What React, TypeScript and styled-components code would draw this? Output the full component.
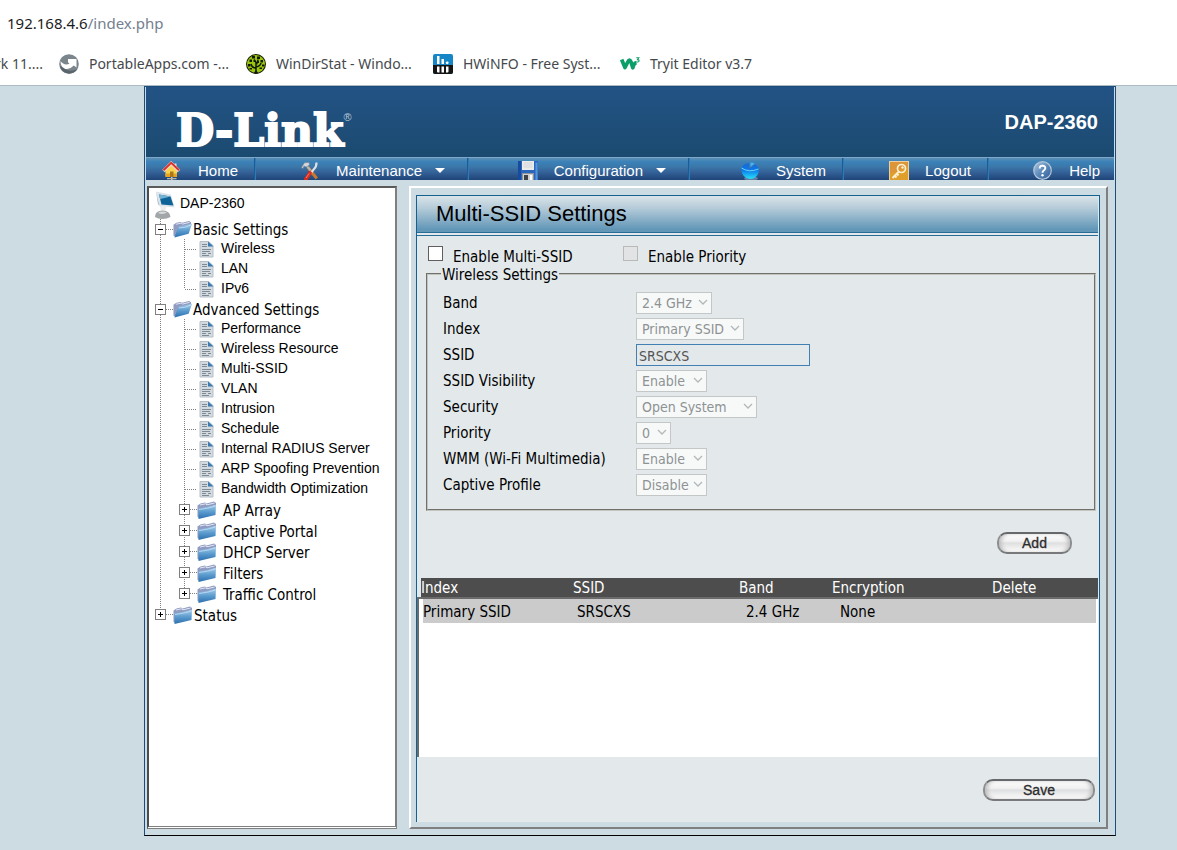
import React from "react";
import styled, { createGlobalStyle } from "styled-components";

const ui = `"DejaVu Sans Condensed", "Noto Sans", sans-serif`;
const arial = `"Liberation Sans", Arial, sans-serif`;
const chrome = `"Noto Sans", "Open Sans", sans-serif`;

const GlobalStyle = createGlobalStyle`
  *, *::before, *::after { box-sizing: border-box; }
  body { margin: 0; background: #cddbe2; font-family: ${ui}; font-size: 15px; color: #000; }
  ul { list-style: none; margin: 0; padding: 0; }
  a { color: inherit; text-decoration: none; }
  svg { display: block; flex: none; }
`;

const Page = styled.div`
  min-height: 100vh;
  display: flex;
  flex-direction: column;
`;

/* ---------- browser strip ---------- */

const BrowserBar = styled.header`
  background: #fff;
  border-bottom: 1px solid #adbcc4;
  height: 86px;
  font-family: ${chrome};
  font-size: 14px;
  overflow: hidden;
`;

const Address = styled.div`
  padding: 11px 7px 0;
  line-height: 24px;
  font-size: 15px;
  color: #1c1c1e;
  span { color: #74808f; }
`;

const Bookmarks = styled.nav`
  display: flex;
  gap: 16px;
  margin-left: -5px;
  padding-top: 17px;
  line-height: 24px;
  color: #45494d;
  white-space: nowrap;
`;

const Bookmark = styled.a<{ $cut?: boolean }>`
  display: flex;
  flex: none;
  align-items: center;
  gap: 10px;
  width: ${(p) => (p.$cut ? "auto" : "171px")};
`;

/* ---------- device frame ---------- */

const Stage = styled.div`
  flex: 1;
  display: flex;
  padding: 0 61px 14px 144px;
`;

const Frame = styled.div`
  flex: 1;
  min-width: 0;
  display: flex;
  flex-direction: column;
  border: 1px solid #1c4c7c;
  border-bottom-color: #000;
`;

const Banner = styled.div`
  height: 70px;
  margin: 0 1px;
  padding: 0 16px 0 30px;
  display: flex;
  align-items: center;
  justify-content: space-between;
  background: linear-gradient(#235385, #1b4a70);
  color: #fff;
  font: bold 20px/24px ${arial};
`;

const Logo = styled.div`
  display: flex;
  align-items: flex-start;
  padding-top: 18px;
  font: bold 44px/48px "DejaVu Serif", serif;
  -webkit-text-stroke: 2px #fff;
  sup {
    font: 11px/12px ${arial};
    color: #b7c9dc;
    -webkit-text-stroke: 0;
    padding-top: 4px;
  }
`;

const Nav = styled.nav`
  display: grid;
  grid-template-columns: 108fr 213fr 221fr 154fr 145fr 127fr;
  height: 23px;
  margin: 0 1px;
`;

const NavItem = styled.a<{ $menu?: boolean }>`
  display: flex;
  align-items: center;
  justify-content: flex-end;
  gap: 16px;
  padding: 3px ${(p) => (p.$menu ? 22 : 16)}px 0 0;
  border-top: 1px solid #7ea6c8;
  background: linear-gradient(#5d8fb5, #3a82b9 18%, #3c77a8 40%, #35649a 62%, #1f4478);
  color: #fff;
  font: 15px/18px ${arial};
  overflow: hidden;
  & + & { box-shadow: inset 1px 0 #1c5c93, inset 2px 0 #2f79b5; }
  &:last-child { padding-right: 14px; }
`;

const Body = styled.div`
  flex: 1;
  display: flex;
  gap: 12px;
  padding: 6px 7px 6px 2px;
`;

/* ---------- tree ---------- */

const TreePanel = styled.aside`
  width: 250px;
  flex: none;
  background: #fff;
  border: 2px solid #7f7f7f;
  border-top-color: #5b5b5b;
  border-left-color: #4d4d4d;
  border-bottom: 3px double #7f7f7f;
  padding: 2px 0 0 6px;
`;

const Root = styled.a`
  display: flex;
  align-items: flex-start;
  gap: 5px;
  height: 29px;
  font: 14px/26px ${arial};
`;

const Branch = styled.ul<{ $nested?: boolean; $tail: number }>`
  margin-left: ${(p) => (p.$nested ? 24 : 0)}px;
  background: repeating-linear-gradient(#808080 0 1px, transparent 1px 2px) 5px 0 / 1px
    calc(100% - ${(p) => p.$tail}px) no-repeat;
`;

const Row = styled.div<{ $tall?: boolean }>`
  display: flex;
  align-items: center;
  height: ${(p) => (p.$tall ? 21 : 20)}px;
  white-space: nowrap;
`;

const Toggle = styled.button`
  width: 11px;
  height: 11px;
  padding: 0;
  border: 1px solid #808080;
  background: #fff;
  flex: none;
`;

const Dash = styled.span<{ $leaf?: boolean }>`
  width: ${(p) => (p.$leaf ? 12 : 7)}px;
  margin: 0 ${(p) => (p.$leaf ? 2 : 0)}px 0 ${(p) => (p.$leaf ? 6 : 0)}px;
  height: 1px;
  flex: none;
  background: repeating-linear-gradient(90deg, #808080 0 1px, transparent 1px 2px);
`;

const FolderLabel = styled.a<{ $inset?: boolean }>`
  padding: 2px 0 0 ${(p) => (p.$inset ? 6 : 1)}px;
  line-height: 18px;
`;

const LeafLabel = styled.a`
  padding: 0 0 2px 7px;
  font: 14px/18px ${arial};
`;

/* ---------- main panel ---------- */

const MainPanel = styled.main`
  flex: 1;
  min-width: 0;
  display: flex;
  border: 2px solid;
  border-color: #fff #7f7f7f #7f7f7f #fff;
  padding: 7px 6px 5px 5px;
`;

const Sheet = styled.div`
  flex: 1;
  min-width: 0;
  border: 1px solid #14618f;
  border-bottom: 0;
  background: #e3e9eb;
`;

const Title = styled.h1`
  margin: 0 1px 2px 0;
  height: 37px;
  padding-left: 19px;
  border-bottom: 1px solid #276d98;
  background: linear-gradient(#dae4e8, #b3cad8 35%, #6397b8 92%);
  font: 22px/36px ${arial};
`;

const Form = styled.form`
  margin-right: 1px;
  border-top: 1px solid #276d98;
`;

const Ticks = styled.div`
  display: grid;
  grid-template-columns: 195px 1fr;
  padding: 10px 0 0 11px;
`;

const Tick = styled.label`
  display: flex;
  align-items: flex-start;
  gap: 10px;
  line-height: 18px;
  span { padding-top: 2px; }
`;

const CheckBox = styled.input`
  appearance: none;
  width: 15px;
  height: 15px;
  margin: 0;
  border: 1px solid #5f5f5f;
  background: #fff;
  &:disabled { border-color: #b9b9b9; background: #e2e3e4; }
`;

const Fieldset = styled.fieldset`
  margin: 0 2px 0 9px;
  padding: 8px 15px 11px;
  border: 2px groove #c4c4be;
  legend {
    margin-left: -2px;
    padding: 2px 1px 0;
    line-height: 14px;
  }
`;

const Field = styled.div`
  display: grid;
  grid-template-columns: 193px 1fr;
  align-items: center;
  height: 26px;
`;

const SelectBox = styled.span<{ $w: number }>`
  position: relative;
  width: ${(p) => p.$w}px;
  height: 22px;
  svg { position: absolute; right: 4px; top: 7px; }
`;

const Select = styled.select`
  appearance: none;
  width: 100%;
  height: 100%;
  padding: 0 0 0 5px;
  border: 1px solid #c3c7c8;
  border-radius: 0;
  background: #f7f9f9;
  color: #8e9293;
  opacity: 1;
  font: 14px/20px ${ui};
`;

const TextBox = styled.input`
  width: 174px;
  height: 22px;
  padding: 1px 2px 0;
  border: 1px solid #4280b4;
  background: #e3e9eb;
  color: #545454;
  font: 14px/18px ${ui};
`;

const Actions = styled.div<{ $inset?: boolean }>`
  display: flex;
  justify-content: flex-end;
  padding: ${(p) => (p.$inset ? "21px 26px 24px" : "22px 3px 0")};
`;

const Pill = styled.button<{ $wide?: boolean }>`
  width: ${(p) => (p.$wide ? 112 : 75)}px;
  height: 22px;
  padding: 0;
  border: 2px solid;
  border-color: #66686b #8c8e90 #77797b;
  border-radius: 10px;
  background: linear-gradient(#fcfcfc, #f1f1f1 40%, #dedfe0 50%, #f4f4f4 85%, #fff);
  box-shadow: inset 4px 0 4px -2px #b9b9b9, inset -4px 0 4px -2px #b9b9b9;
  color: #2c2c2c;
  font: 14px/18px ${arial};
  -webkit-text-stroke: 0.3px #2c2c2c;
`;

const Table = styled.table`
  display: block;
  line-height: 20px;
  thead, tbody { display: block; }
  thead {
    margin-left: 4px;
    background: #4d4d4d;
    color: #fff;
  }
  tbody {
    height: 160px;
    padding: 0 2px 0 4px;
    border-top: 2px solid #6b6b6b;
    border-left: 2px solid #6b6b6b;
    background: #fff;
  }
  tr { display: grid; text-align: left; }
  thead tr { grid-template-columns: 152fr 166fr 93fr 160fr 106fr; height: 19px; }
  tbody tr {
    grid-template-columns: 154fr 169fr 94fr 152fr 104fr;
    height: 24px;
    line-height: 26px;
    background: #cbcbcb;
  }
  th, td { padding: 0; font-weight: normal; }
`;

/* ---------- drawings ---------- */

const CaretSvg = styled.svg`
  margin-left: -3px;
`;

const Caret = () => (
  <CaretSvg width="10" height="5" viewBox="0 0 10 5">
    <path d="M0 0h10L5 5z" fill="#fff" />
  </CaretSvg>
);

const Chevron = () => (
  <svg width="10" height="7" viewBox="0 0 10 7" fill="none" stroke="#b3b7b8" strokeWidth="1.3">
    <path d="M1 1l4 4 4-4" />
  </svg>
);

const PortableIcon = () => (
  <svg width="20" height="20" viewBox="0 0 20 20">
    <circle cx="10" cy="10" r="9.8" fill="#7b858c" />
    <path d="M1 12Q2 18 9 19.6Q15 20 18.6 15Q11 18.500 6 15Q3 13 1 12z" fill="#59646c" />
    <path d="M1.500 7Q5 12 10.500 9.800L9 8.300V5h8.500v8.500l-2.700-2Q10 16.500 5.500 14.500Q1.500 12.500 1.500 7z" fill="#fff" />
  </svg>
);

const WinDirIcon = () => (
  <svg width="20" height="20" viewBox="0 0 20 20">
    <circle cx="10" cy="10" r="10" fill="#161c05" />
    <circle cx="10" cy="10" r="9" fill="#9ac70c" />
    <g stroke="#12180a" fill="none">
      <path d="M10 19.500V9M10 14Q6 14 5 10M10 13Q14.500 12 15 9M10 9Q10 7 8 5.500M10.500 10Q12 8 12 5.500" strokeWidth="1.500" />
    </g>
    <g fill="#12180a">
      <path d="M6 2h3v2.500H6zM11 2.500h3v2.500h-3zM3.500 5.500h2.500v2.500H3.500zM14.500 6h2.500v2.500h-2.500zM2 10h2.500v2.500H2zM7.500 6h1.500v2H7.500zM11.500 7h1.500v2h-1.500zM16 10.500h2.500v2H16zM3.500 14h2.500v1.500H3.500zM13.500 13.500h2.500v1.500h-2.500z" />
      <path d="M7.500 19.500L10 16l2.500 3.500z" />
    </g>
  </svg>
);

const HwIcon = () => (
  <svg width="20" height="20" viewBox="0 0 20 20">
    <rect width="20" height="20" rx="2" fill="#1786c6" />
    <path d="M0 11h20v7a2 2 0 0 1-2 2H2a2 2 0 0 1-2-2z" fill="#151515" />
    <path d="M4 2h2.500v8H4zM8.500 5H11v5H8.500z" fill="#fff" />
    <circle cx="14.200" cy="8.800" r="1.400" fill="#fff" />
    <path d="M4 12.500h2.500v6H5a1 1 0 0 1-1-1zM8.500 12.500H11v6H8.500zM13 12.500h2.500v5a1 1 0 0 1-1 1H13z" fill="#fff" />
  </svg>
);

const W3Icon = () => (
  <svg width="20" height="20" viewBox="0 0 20 20">
    <path d="M1.600 5.500L5 13.500L7.800 8Q9.500 4.500 11 8L12.800 13.800Q13.500 9.500 16.300 8.500" fill="none" stroke="#0a9f68" strokeWidth="3.800" strokeLinejoin="round" />
    <path d="M16.300 3.700h2.500l-1.300 1.900q1.800 0 1.500 1.600q-.7 1.300-2.900.5" fill="none" stroke="#0a9f68" strokeWidth="1.100" />
  </svg>
);

const HomeIcon = () => (
  <svg width="20" height="20" viewBox="0 0 20 20">
    <path d="M3.500 9L9.500 4 15 9v6.500H3.500z" fill="#f9d34c" />
    <path d="M3.500 12.500H15v3.500H3.500z" fill="#e9a41f" />
    <path d="M12.500 2.500h2v4h-2z" fill="#e8e0dd" />
    <path d="M1.500 10L9.200 2.300 17 10" fill="none" stroke="#f6d9d4" strokeWidth="3.400" />
    <path d="M1.500 9.300L9.200 1.800 17 9.300" fill="none" stroke="#d93227" strokeWidth="2" />
    <path d="M8 10.500h3.500V16H8z" fill="#a8761d" />
    <path d="M9 16h1.500v4H9z" fill="#cfc7b4" />
    <path d="M5 17h9.500v1.300H5z" fill="#bdb59f" />
  </svg>
);

const ToolsIcon = () => (
  <svg width="20" height="20" viewBox="0 0 20 20" fill="none">
    <path d="M8 6.500L16.800 17.500" stroke="#c8792c" strokeWidth="3" />
    <path d="M6.500 4.500L10.500 9.300" stroke="#b4b7bb" strokeWidth="2" />
    <path d="M1.500 6.500L4.500 1.800l4.500-.3L9.500 4 6 6 4 5 3 7.500z" fill="#d4d8de" stroke="#7c828b" strokeWidth=".6" />
    <path d="M16.500 1.500Q16.500 6 14 8L10 13" stroke="#dde1e6" strokeWidth="2.200" />
    <path d="M10 12L6 18" stroke="#dc2a1c" strokeWidth="3.800" strokeLinecap="round" />
    <path d="M9.300 12.300L6 17" stroke="#ff8a72" strokeWidth=".8" />
  </svg>
);

const DiskIcon = () => (
  <svg width="20" height="20" viewBox="0 0 20 20">
    <path d="M0 0h20v20H0z" fill="#2a66bd" />
    <path d="M0 0h3v20H0z" fill="#164b9d" />
    <path d="M17.500 1.500h2v18h-2z" fill="#5794da" />
    <path d="M4 0h12v9H4z" fill="#ebebea" />
    <path d="M5.500 2h9M5.500 4h9M5.500 6h9" stroke="#d3d5d8" />
    <path d="M4 12h12v8H4z" fill="#8e9399" />
    <path d="M5 13h10v7H5z" fill="#cfd1d1" />
    <path d="M6 14h4v6H6z" fill="#3f4347" />
    <path d="M12 14h2v5h-2z" fill="#fff" />
  </svg>
);

const SystemIcon = () => (
  <svg width="20" height="20" viewBox="0 0 20 20">
    <defs>
      <linearGradient id="sys" x2="0" y2="1">
        <stop offset="0" stopColor="#1766d8" />
        <stop offset=".45" stopColor="#0b7be8" />
        <stop offset="1" stopColor="#27e2fb" />
      </linearGradient>
    </defs>
    <ellipse cx="11" cy="17.500" rx="7" ry="2" fill="#8fa3bd" opacity=".6" />
    <path d="M9 2v6l6-4.500Q19.500 6 19 10Q17 18 10 18Q2 17 1 8Q2 3 9 2z" fill="url(#sys)" />
    <path d="M10.500 1.500Q13 1.500 14.500 2.500L10.500 6z" fill="#43b6f7" />
    <path d="M1.500 7Q9 12 18.500 8" fill="none" stroke="#74cffa" strokeWidth="1" />
  </svg>
);

const KeyIcon = () => (
  <svg width="20" height="20" viewBox="0 0 20 20">
    <rect x=".5" y=".5" width="19" height="19" fill="#dc9638" stroke="#f0cf9e" />
    <path d="M1 12Q10 12 19 5V19H1z" fill="#e3a820" opacity=".55" />
    <circle cx="12.500" cy="7.500" r="4" fill="none" stroke="#fff0d2" strokeWidth="1.700" />
    <circle cx="13.500" cy="6.500" r="1.200" fill="#fff0d2" />
    <path d="M10 10.500L3.500 17M6 15l1.500 1.500M8 13l1.500 1.500" stroke="#fff0d2" strokeWidth="1.900" fill="none" />
  </svg>
);

const HelpIcon = () => (
  <svg width="20" height="20" viewBox="0 0 20 20">
    <defs>
      <linearGradient id="hlp" x2="1" y2="1">
        <stop offset="0" stopColor="#b4cbe2" />
        <stop offset=".5" stopColor="#5c8abb" />
        <stop offset="1" stopColor="#2f5d97" />
      </linearGradient>
    </defs>
    <circle cx="9.500" cy="9.500" r="8.800" fill="url(#hlp)" stroke="#b3c5d9" strokeWidth="1.200" />
    <path d="M6.800 7.500Q6.500 4.700 9.500 4.700T12.300 7.300Q12.200 8.800 10.500 9.700Q9.500 10.500 9.500 11.800" fill="none" stroke="#fff" strokeWidth="1.900" />
    <circle cx="9.500" cy="14.300" r="1.200" fill="#fff" />
  </svg>
);

const ComputerIcon = () => (
  <svg width="20" height="30" viewBox="0 0 20 30">
    <path d="M1 1.500L16 4.500 19.500 17.500 4.500 16z" fill="#dbe4ea" />
    <path d="M4 4.500L15.500 6.500 18.500 15.500 6.500 14.500z" fill="#0f6497" />
    <path d="M4 4.500L15.500 6.500Q9 8 5 9z" fill="#74b3d4" />
    <path d="M1 1.500L4.500 16 3 14z" fill="#a5b2ba" />
    <path d="M5 16h7l-2 5H6z" fill="#eceeee" />
    <path d="M0 27Q0 20.500 7.500 20.500T15.500 27Q12 29 7.500 29T0 27z" fill="#a3a6a8" />
    <path d="M3 23Q7 20.500 12 22.500Q8 25 3 23z" fill="#d8dadb" />
  </svg>
);

const FolderIcon = ({ open }: { open?: boolean }) => (
  <svg width={open ? 19 : 20} height="18" viewBox="0 0 20 18">
    <defs>
      <linearGradient id="fld" x2="0" y2="1">
        <stop offset="0" stopColor="#a5cdec" />
        <stop offset=".5" stopColor="#5b9bce" />
        <stop offset="1" stopColor="#2b6fae" />
      </linearGradient>
    </defs>
    <path d="M.5 4.500L3.500 2.500 8 1.500 9.500 2.500 17 .5 19 2V4L6 8 2.500 17 .5 16z" fill="#8f9bc0" />
    <path d="M3 4L8.500 2.800 10 3.800 17.500 2" stroke="#e3e8f5" fill="none" />
    {open ? (
      <path d="M5.500 6.500L20 3.500 16.500 14 1.500 18z" fill="url(#fld)" />
    ) : (
      <path d="M1.500 7.500Q10 6.500 19 3.800L18.500 14Q10 16 1.500 18z" fill="url(#fld)" />
    )}
    {open ? (
      <path d="M6.500 7.800Q13 8 19 4.800" stroke="#c9e2f4" fill="none" strokeWidth=".8" />
    ) : (
      <path d="M2 8.500Q11 7.500 18.500 5" stroke="#c2def3" fill="none" strokeWidth=".8" />
    )}
  </svg>
);

const PageIcon = () => (
  <svg width="15" height="17" viewBox="0 0 15 17">
    <path d="M1 .5h8.500l4.500 4V16H1z" fill="#d3dae0" stroke="#b5bfc8" />
    <path d="M9 .5L14.500 5.500H9z" fill="#3c7bb0" />
    <path d="M3 3.500h5M3 5.500h5M3 8.500h9M3 10.500h8M3 12.500h4M9 12.500h3M3 14.500h7" stroke="#7f8992" />
  </svg>
);

const ToggleMark = ({ open }: { open?: boolean }) => (
  <svg width="9" height="9" viewBox="0 0 9 9">
    <path d={open ? "M2 4h5v1H2z" : "M2 4h5v1H2zM4 2h1v5H4z"} fill="#000" />
  </svg>
);

/* ---------- pieces ---------- */

const Leaf = ({ name }: { name: string }) => (
  <li>
    <Row>
      <Dash $leaf />
      <PageIcon />
      <LeafLabel href="#">{name}</LeafLabel>
    </Row>
  </li>
);

type FolderProps = { name: string; open?: boolean; inset?: boolean; children?: React.ReactNode };

const Folder = ({ name, open, inset, children }: FolderProps) => (
  <li>
    <Row $tall={!open}>
      <Toggle type="button" aria-label={name}>
        <ToggleMark open={open} />
      </Toggle>
      <Dash />
      <FolderIcon open={open} />
      <FolderLabel href="#" $inset={inset}>{name}</FolderLabel>
    </Row>
    {children}
  </li>
);

const Choice = ({ id, label, value, w }: { id: string; label: string; value: string; w: number }) => (
  <Field>
    <label htmlFor={id}>{label}</label>
    <SelectBox $w={w}>
      <Select id={id} disabled defaultValue={value}>
        <option>{value}</option>
      </Select>
      <Chevron />
    </SelectBox>
  </Field>
);

const advanced = [
  "Performance", "Wireless Resource", "Multi-SSID", "VLAN", "Intrusion", "Schedule",
  "Internal RADIUS Server", "ARP Spoofing Prevention", "Bandwidth Optimization",
];
const groups = ["AP Array", "Captive Portal", "DHCP Server", "Filters", "Traffic Control"];

export default function App() {
  return (
    <Page>
      <GlobalStyle />
      <BrowserBar>
        <Address>192.168.4.6<span>/index.php</span></Address>
        <Bookmarks>
          <Bookmark href="#" $cut>rk 11....</Bookmark>
          <Bookmark href="#"><PortableIcon />PortableApps.com -...</Bookmark>
          <Bookmark href="#"><WinDirIcon />WinDirStat - Windo...</Bookmark>
          <Bookmark href="#"><HwIcon />HWiNFO - Free Syst...</Bookmark>
          <Bookmark href="#"><W3Icon />Tryit Editor v3.7</Bookmark>
        </Bookmarks>
      </BrowserBar>
      <Stage>
        <Frame>
          <Banner>
            <Logo>D-Link<sup>®</sup></Logo>
            <span>DAP-2360</span>
          </Banner>
          <Nav>
            <NavItem href="#"><HomeIcon />Home</NavItem>
            <NavItem href="#" $menu><ToolsIcon />Maintenance<Caret /></NavItem>
            <NavItem href="#" $menu><DiskIcon />Configuration<Caret /></NavItem>
            <NavItem href="#"><SystemIcon />System</NavItem>
            <NavItem href="#"><KeyIcon />Logout</NavItem>
            <NavItem href="#"><HelpIcon />Help</NavItem>
          </Nav>
          <Body>
            <TreePanel>
              <Root href="#"><ComputerIcon />DAP-2360</Root>
              <Branch $tail={11}>
                <Folder name="Basic Settings" open>
                  <Branch $nested $tail={10}>
                    <Leaf name="Wireless" />
                    <Leaf name="LAN" />
                    <Leaf name="IPv6" />
                  </Branch>
                </Folder>
                <Folder name="Advanced Settings" open>
                  <Branch $nested $tail={11}>
                    {advanced.map((n) => <Leaf key={n} name={n} />)}
                    {groups.map((n) => <Folder key={n} name={n} inset />)}
                  </Branch>
                </Folder>
                <Folder name="Status" />
              </Branch>
            </TreePanel>
            <MainPanel>
              <Sheet>
                <Title>Multi-SSID Settings</Title>
                <Form>
                  <Ticks>
                    <Tick><CheckBox type="checkbox" /><span>Enable Multi-SSID</span></Tick>
                    <Tick><CheckBox type="checkbox" disabled /><span>Enable Priority</span></Tick>
                  </Ticks>
                  <Fieldset>
                    <legend>Wireless Settings</legend>
                    <Choice id="band" label="Band" value="2.4 GHz" w={76} />
                    <Choice id="index" label="Index" value="Primary SSID" w={108} />
                    <Field>
                      <label htmlFor="ssid">SSID</label>
                      <TextBox id="ssid" defaultValue="SRSCXS" />
                    </Field>
                    <Choice id="visibility" label="SSID Visibility" value="Enable" w={71} />
                    <Choice id="security" label="Security" value="Open System" w={121} />
                    <Choice id="priority" label="Priority" value="0" w={35} />
                    <Choice id="wmm" label="WMM (Wi-Fi Multimedia)" value="Enable" w={71} />
                    <Choice id="captive" label="Captive Profile" value="Disable" w={71} />
                  </Fieldset>
                  <Actions $inset><Pill type="button">Add</Pill></Actions>
                  <Table>
                    <thead>
                      <tr><th>Index</th><th>SSID</th><th>Band</th><th>Encryption</th><th>Delete</th></tr>
                    </thead>
                    <tbody>
                      <tr><td>Primary SSID</td><td>SRSCXS</td><td>2.4 GHz</td><td>None</td><td /></tr>
                    </tbody>
                  </Table>
                  <Actions><Pill type="button" $wide>Save</Pill></Actions>
                </Form>
              </Sheet>
            </MainPanel>
          </Body>
        </Frame>
      </Stage>
    </Page>
  );
}
